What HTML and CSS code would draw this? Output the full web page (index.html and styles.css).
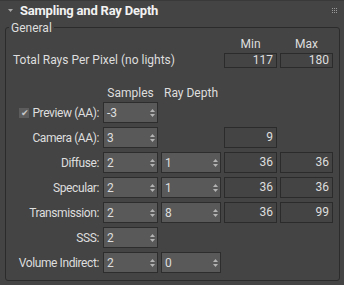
FILE: index.html
```html
<!DOCTYPE html>
<html lang="en">
<head>
  <meta charset="UTF-8" />
  <title>Sampling and Ray Depth</title>
  <link rel="stylesheet" href="styles.css">
</head>
<body>
  <div class="rollout">
    <div class="header">
      <svg class="caret" width="5" height="3" viewBox="0 0 5 3"><polygon points="0,0 5,0 2.5,3" fill="#a8a8a8"/></svg>
      <span class="title">Sampling and Ray Depth</span>
      <svg class="grip" width="5" height="5" viewBox="0 0 5 5" fill="#9a9a9a">
        <rect x="0" y="0" width="1" height="1"/><rect x="2" y="0" width="1" height="1"/><rect x="4" y="0" width="1" height="1"/>
        <rect x="0" y="2" width="1" height="1"/><rect x="2" y="2" width="1" height="1"/><rect x="4" y="2" width="1" height="1"/>
        <rect x="0" y="4" width="1" height="1"/><rect x="2" y="4" width="1" height="1"/><rect x="4" y="4" width="1" height="1"/>
      </svg>
    </div>

    <div class="group">
      <div class="legend">General</div>
      <div class="grid" id="grid">
        <div></div><div></div><div></div>
        <div class="head top">Min</div>
        <div class="head top">Max</div>

        <div class="total">Total Rays Per Pixel (no lights)</div>
        <div class="num small">117</div>
        <div class="num small">180</div>

        <div></div>
        <div class="head bottom">Samples</div>
        <div class="head bottom left">Ray Depth</div>
        <div></div><div></div>
      </div>
    </div>
  </div>

  <script>
    // label, samples, ray depth, min, max (null = empty cell)
    const rows = [
      ["Preview (AA):", "-3", null, null, null, true],
      ["Camera (AA):", "3", null, "9", null],
      ["Diffuse:", "2", "1", "36", "36"],
      ["Specular:", "2", "1", "36", "36"],
      ["Transmission:", "2", "8", "36", "99"],
      ["SSS:", "2", null, null, null],
      ["Volume Indirect:", "2", "0", null, null]
    ];

    const arrows = '<svg class="arrows" width="5" height="8" viewBox="0 0 5 8">' +
      '<polygon points="0,3 2.5,0 5,3" fill="#b4b4b4"/>' +
      '<polygon points="0,5 5,5 2.5,8" fill="#b4b4b4"/></svg>';

    const grid = document.getElementById('grid');

    rows.forEach(r => {
      let html = '<div class="label">';
      if (r[5]) html += '<span class="check">&#10004;</span>';
      html += r[0] + '</div>';
      [r[1], r[2]].forEach(v => {
        html += v === null ? '<div></div>' : `<div class="spin"><span>${v}</span>${arrows}</div>`;
      });
      [r[3], r[4]].forEach(v => {
        html += v === null ? '<div></div>' : `<div class="num">${v}</div>`;
      });
      grid.insertAdjacentHTML('beforeend', html);
    });
  </script>
</body>
</html>
```

FILE: styles.css
```css
* {
  box-sizing: border-box;
}
body {
  margin: 0;
  background: #444444;
  color: #dedede;
  font-family: Roboto, sans-serif;
  font-size: 12px;
  line-height: 14px;
}
.rollout {
  width: 344px;
  height: 285px;
  border-top: 1px solid #393939;
}
.header {
  display: flex;
  align-items: center;
  height: 21px;
  padding: 0 7px 2px 8px;
}
.caret {
  margin-right: 7px;
}
.title {
  font-weight: bold;
  font-size: 13px;
  letter-spacing: -0.2px;
  color: #f2f2f2;
}
.grip {
  margin-left: auto;
}
.group {
  margin: 5px 4px 0 5px;
  height: 254px;
  border: 1px solid #2b2b2b;
  border-radius: 3px;
}
.legend {
  width: fit-content;
  margin: -7px 0 0 3px;
  padding: 0 2px;
  background: #444444;
}
.grid {
  display: grid;
  grid-template-columns: 94px 55px 60px 53px 53px;
  grid-template-rows: 16px 15px 34px repeat(7, 25px);
  column-gap: 3px;
  margin-top: 2px;
}
.head {
  text-align: center;
}
.head.bottom {
  align-self: end;
  margin-bottom: 2px;
}
.head.left {
  text-align: left;
  padding-left: 3px;
}
.total {
  grid-column: 1 / 4;
  padding-left: 7px;
  line-height: 15px;
}
.label {
  display: flex;
  align-items: center;
  justify-content: flex-end;
  height: 21px;
  padding-right: 1px;
  white-space: nowrap;
  letter-spacing: -0.4px;
}
.check {
  width: 10px;
  height: 10px;
  margin-right: 3px;
  background: #5c5c5c;
  color: #c8c8c8;
  font-size: 9px;
  line-height: 10px;
  text-align: center;
}
.spin {
  display: flex;
  align-items: center;
  justify-content: space-between;
  height: 21px;
  padding: 0 2px 0 3px;
  background: #595959;
  border: 1px solid #2d2d2d;
}
.arrows {
  margin-top: 1px;
}
.num {
  height: 21px;
  padding-right: 3px;
  border: 1px solid #2b2b2b;
  text-align: right;
  line-height: 19px;
}
.num.small {
  height: 15px;
  line-height: 13px;
}
```
